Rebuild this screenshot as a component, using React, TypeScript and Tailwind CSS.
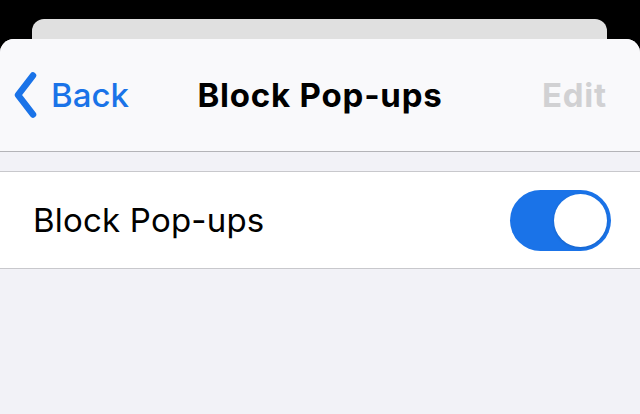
export default function App() {
  return (
    <div
      className="w-[640px] h-[414px] bg-black overflow-hidden flex flex-col"
      style={{ fontFamily: "Inter, 'Noto Sans', sans-serif" }}
    >
      {/* card behind */}
      <div className="h-[39px] pt-[19px] pl-[32px] pr-[33px] shrink-0">
        <div className="h-full bg-[#e0e0e0] rounded-t-[12px]" />
      </div>

      {/* sheet */}
      <div className="flex-1 bg-[#f2f2f7] rounded-t-[14px] overflow-hidden flex flex-col">
        <div className="relative h-[113px] shrink-0 bg-[#f9f9fb] border-b border-[#b4b4b8] flex items-center px-[14px]">
          <div className="flex items-center gap-[14px] text-[#1a73e8]">
            <svg width="23" height="46" viewBox="0 0 23 46" fill="none">
              <path d="M19 3.5 L4 23 L19 42.5" stroke="currentColor" strokeWidth="6.5" strokeLinecap="round" strokeLinejoin="round" />
            </svg>
            <span className="text-[33px] font-medium leading-none">Back</span>
          </div>
          <div className="absolute inset-0 flex items-center justify-center pointer-events-none">
            <span className="text-[33px] font-bold leading-none tracking-[0.8px] text-black">Block Pop-ups</span>
          </div>
          <span className="ml-auto mr-[19px] text-[33px] font-bold leading-none tracking-[0.8px] text-[#d1d1d3]">Edit</span>
        </div>

        <div className="h-[19px] shrink-0" />

        <div className="h-[98px] shrink-0 bg-white border-y border-[#c8c8cc] flex items-center pl-[33px] pr-[29px]">
          <span className="text-[33px] leading-none tracking-[0.2px] text-black">Block Pop-ups</span>
          <div className="ml-auto w-[101px] h-[61px] rounded-full bg-[#1a73e8] p-[4px] flex justify-end">
            <div className="w-[53px] h-[53px] rounded-full bg-white shadow-[0_1px_3px_rgba(0,0,0,0.15)]" />
          </div>
        </div>
      </div>
    </div>
  );
}
